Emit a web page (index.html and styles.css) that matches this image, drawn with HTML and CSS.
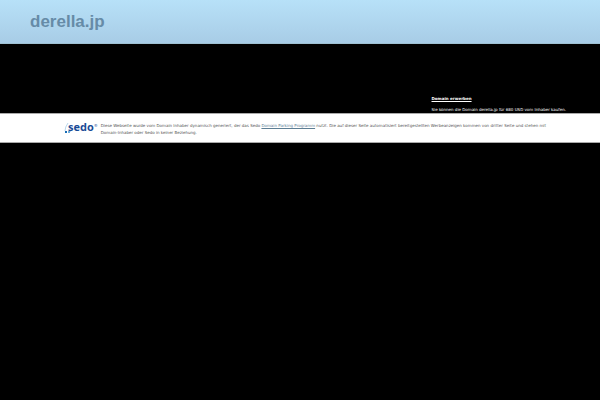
FILE: index.html
```html
<!DOCTYPE html>
<html lang="de">
<head>
<meta charset="utf-8">
<title>derella.jp</title>
<link rel="stylesheet" href="styles.css">
</head>
<body>
<header class="header"><h1 class="domain">derella.jp</h1></header>
<main class="content">
<section class="offer">
<a class="offer-link" href="#">Domain erwerben</a>
<p class="offer-text">Sie können die Domain derella.jp für 680 USD vom Inhaber kaufen.</p>
</section>
</main>
<footer class="footer">
<div class="logo" role="img" aria-label="sedo">
<svg class="logo-mark" viewBox="0 0 8 13" aria-hidden="true">
<path d="M4 1Q1 5 1 9" fill="none" stroke="#b9d8ed" stroke-width="1"/>
<rect x="1" y="9" width="2" height="2" fill="#176bb5"/>
<rect x="4" y="9" width="2" height="2" fill="#6daedb"/>
<rect x="6" y="9" width="1" height="1" fill="#b4d7ef"/>
</svg>
<span class="logo-name">sedo</span><span class="logo-reg">®</span>
</div>
<p class="notice">Diese Webseite wurde vom Domain Inhaber dynamisch generiert, der das Sedo <a class="notice-link" href="#">Domain Parking Programm</a> nutzt. Die auf dieser Seite automatisiert bereitgestellten Werbeanzeigen kommen von dritter Seite und stehen mit<br>Domain-Inhaber oder Sedo in keiner Beziehung.</p>
</footer>
</body>
</html>
```
FILE: styles.css
```css
body {
  margin: 0;
  background: #000;
  color: #fff;
  font: 4px/7px "DejaVu Sans", Verdana, sans-serif;
}
.header {
  padding: 10px 30px;
  background: linear-gradient(#b7e1f8, #a8cce6);
  border-bottom: 1px solid #9fc1d3;
}
.domain {
  margin: 0;
  color: #668ba7;
  font: bold 17px/23px "Liberation Sans", Arial, sans-serif;
}
.content {
  display: flex;
  justify-content: flex-end;
  padding: 51px 34px 0;
}
.offer-link {
  display: block;
  color: #fff;
  font-weight: bold;
}
.offer-text {
  margin: 4px 0 0;
  white-space: nowrap;
}
.footer {
  display: flex;
  align-items: flex-start;
  gap: 3px;
  padding: 8px 48px 6px 64px;
  background: #fff;
  border-top: 1px solid #aaa;
  border-bottom: 1px solid #aaa;
  color: #555;
}
.logo {
  display: flex;
  align-items: flex-start;
  color: #194a96;
}
.logo-mark {
  width: 8px;
  height: 13px;
  margin-right: -4px;
}
.logo-name {
  font: bold 11px/10px "Open Sans", sans-serif;
}
.notice {
  margin: 0;
}
.notice-link {
  color: #5d7e94;
}
```
